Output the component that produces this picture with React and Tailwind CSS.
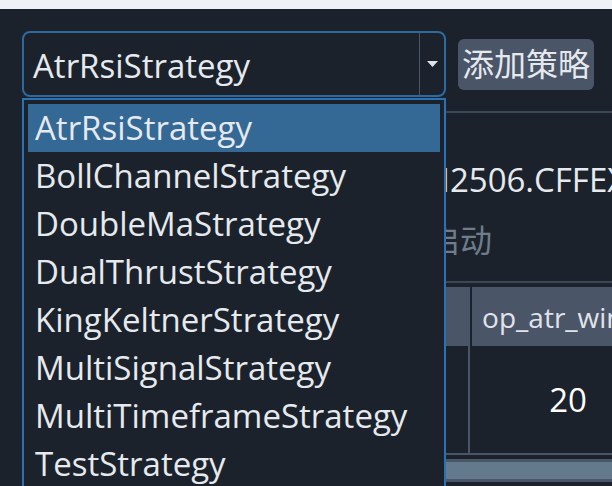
import React from 'react';

const strategies = [
    'AtrRsiStrategy',
    'BollChannelStrategy',
    'DoubleMaStrategy',
    'DualThrustStrategy',
    'KingKeltnerStrategy',
    'MultiSignalStrategy',
    'MultiTimeframeStrategy',
    'TestStrategy',
];

const App = () => {
    const selected = 'AtrRsiStrategy';

    return (
        <div className="relative w-[612px] h-[486px] overflow-hidden bg-[#1b222c] text-[#e6eaee] font-['Open_Sans','Noto_Sans_CJK_SC',sans-serif]">
            {/* window top strip */}
            <div className="h-[9px] bg-[#eef2f7]"></div>

            <div className="pl-[22px] pt-[22px]">
                {/* strategy picker row */}
                <div className="flex items-center gap-3">
                    <div className="w-[424px] h-[66px] shrink-0 flex border-2 border-[#2d6aa0] rounded-lg">
                        <div className="flex-1 flex items-center pl-[9px] pt-[3px] text-[33px] leading-none">{selected}</div>
                        <div className="w-[25px] border-l border-[#4a5568] flex items-center justify-center">
                            <svg width="11" height="6" viewBox="0 0 11 6">
                                <path d="M0 0 L11 0 L5.5 6 Z" fill="#dfe3e8" />
                            </svg>
                        </div>
                    </div>
                    <button className="h-[51px] shrink-0 px-1 bg-[#4a5568] rounded-md text-[32px] leading-none text-[#e5e9ee]">添加策略</button>
                </div>

                <div className="mt-[14px] h-[2px] bg-[#3b4656]"></div>

                {/* strategy settings */}
                <div className="mt-[43px] h-[48px] flex items-center text-[33px] whitespace-nowrap">
                    <span className="w-[389px] shrink-0 text-[#9aa5b1]">本地代码</span>
                    <span className="shrink-0">IM2506.CFFEX</span>
                </div>
                <div className="mt-[12px] h-[48px] flex items-center text-[32px] whitespace-nowrap text-[#6f7c8a]">
                    <span className="w-[374px] shrink-0">状态</span>
                    <span className="shrink-0">未启动</span>
                </div>

                {/* parameter table */}
                <div className="mt-[17px] h-[2px] bg-[#3b4656]"></div>
                <div className="mt-[4px] flex h-[59px]">
                    <div className="w-[448px] shrink-0 bg-[#4a5568]"></div>
                    <div className="w-[2px] shrink-0"></div>
                    <div className="w-[194px] shrink-0 bg-[#4a5568] px-[10px] flex items-center">
                        <div className="w-full overflow-hidden flex justify-center">
                            <span className="shrink-0 whitespace-nowrap text-[28px] text-[#e0e4ea]">stop_atr_window</span>
                        </div>
                    </div>
                </div>
                <div className="flex h-[107px]">
                    <div className="w-[446px] shrink-0"></div>
                    <div className="w-[2px] shrink-0 bg-[#4a5568]"></div>
                    <div className="w-[196px] shrink-0 flex items-center justify-center text-[33px] text-white">20</div>
                </div>
                <div className="h-[2px] bg-[#4a5568]"></div>
                <div className="mt-[4px] h-[23px] bg-[#4a5568] py-[3px]">
                    <div className="h-full bg-[#637a8c]"></div>
                </div>
            </div>

            {/* open dropdown list */}
            <div className="absolute left-[22px] top-[98px] w-[424px] border-2 border-[#2a72b5] bg-[#1b222c] p-[4px]">
                {strategies.map((name) => (
                    <div
                        key={name}
                        className={`h-[48px] flex items-center pl-[7px] text-[33px] whitespace-nowrap ${name === selected ? 'bg-[#346895]' : ''}`}
                    >
                        {name}
                    </div>
                ))}
            </div>
        </div>
    );
};

export default App;
